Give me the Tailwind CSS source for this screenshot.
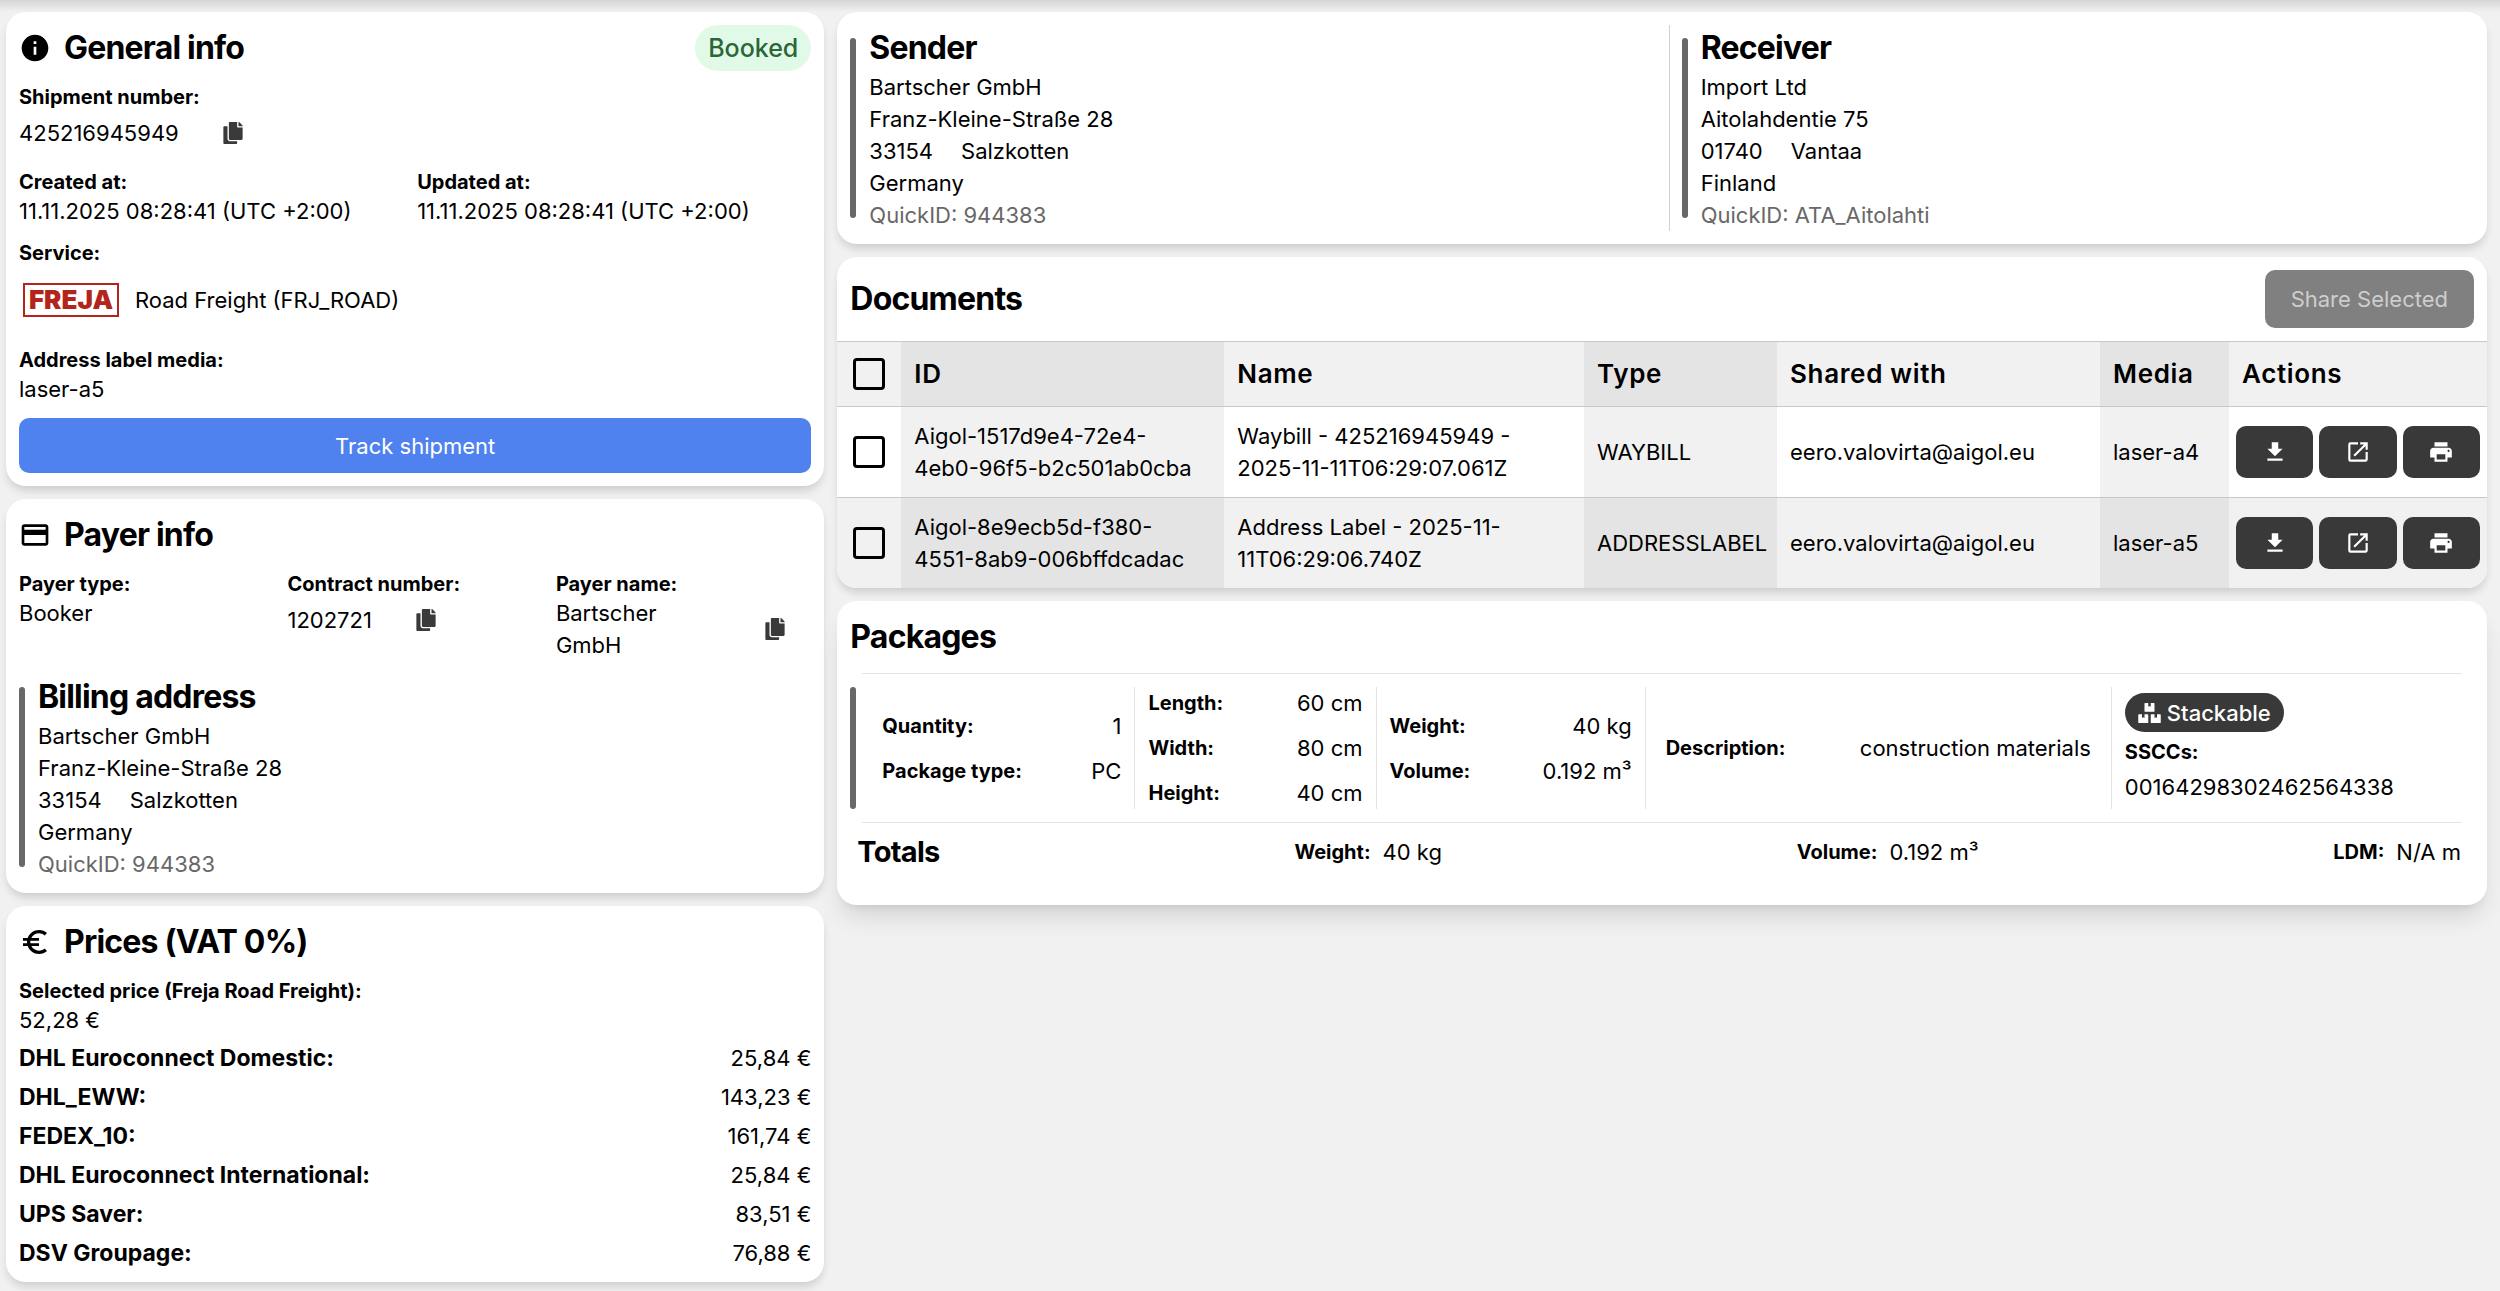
<!DOCTYPE html>
<html lang="en">
<head>
  <meta charset="UTF-8">
  <meta name="viewport" content="width=device-width, initial-scale=1.0">
  <title>Shipment 425216945949</title>
  <script src="https://cdn.jsdelivr.net/npm/@tailwindcss/browser@4"></script>
</head>
<body class="bg-[#f1f1f1] min-h-screen text-black text-[22px]/[32px] font-['Inter',sans-serif]">
  <!-- icons -->
  <svg class="hidden">
    <symbol id="icon-copy" viewBox="0 0 448 512"><path d="M320 448v40c0 13.255-10.745 24-24 24H24c-13.255 0-24-10.745-24-24V120c0-13.255 10.745-24 24-24h72v296c0 30.879 25.121 56 56 56h168zm0-344V0H152c-13.255 0-24 10.745-24 24v368c0 13.255 10.745 24 24 24h272c13.255 0 24-10.745 24-24V128H344c-13.2 0-24-10.8-24-24zm120.971-31.029L375.029 7.029A24 24 0 0 0 358.059 0H352v96h96v-6.059a24 24 0 0 0-7.029-16.97z"/></symbol>
    <symbol id="icon-download" viewBox="0 0 24 24"><path d="M19 9h-4V3H9v6H5l7 7 7-7zM5 18v2h14v-2H5z"/></symbol>
    <symbol id="icon-open" viewBox="0 0 24 24"><path d="M19 19H5V5h7V3H5a2 2 0 0 0-2 2v14a2 2 0 0 0 2 2h14c1.1 0 2-.9 2-2v-7h-2v7zM14 3v2h3.59l-9.83 9.83 1.41 1.41L19 6.41V10h2V3h-7z"/></symbol>
    <symbol id="icon-print" viewBox="0 0 24 24"><path d="M19 8H5c-1.66 0-3 1.34-3 3v6h4v4h12v-4h4v-6c0-1.66-1.34-3-3-3zm-3 11H8v-5h8v5zm3-7c-.55 0-1-.45-1-1s.45-1 1-1 1 .45 1 1-.45 1-1 1zm-1-9H6v4h12V3z"/></symbol>
  </svg>

  <div class="h-3 bg-linear-to-b from-[#d6d6d6] to-[#f1f1f1]"></div>

  <main class="grid grid-cols-12 items-start gap-[13px] pl-[6px] pr-[13px] pb-[10px]">
    <div class="col-span-4 flex flex-col gap-[13px]">

      <!-- General info -->
      <section class="bg-white rounded-[20px] shadow-[0_6px_10px_-2px_rgba(0,0,0,0.16)] p-[13px] flex flex-col gap-[13px]">
        <div class="flex items-center justify-between">
          <div class="flex items-center gap-[13px]">
            <svg class="size-8" viewBox="0 0 24 24"><path d="M12 2C6.48 2 2 6.48 2 12s4.48 10 10 10 10-4.48 10-10S17.52 2 12 2zm1 15h-2v-6h2v6zm0-8h-2V7h2v2z"/></svg>
            <h2 class="text-[32px]/[46px] font-bold tracking-tight">General info</h2>
          </div>
          <span class="bg-[#e1fae8] text-[#2a6637] text-[25px]/[46px] font-medium rounded-full px-[13px]">Booked</span>
        </div>
        <div>
          <h3 class="text-[20px]/[26px] font-bold">Shipment number:</h3>
          <div class="flex items-center h-[46px]">
            <span>425216945949</span>
            <button type="button" aria-label="Copy shipment number" class="ml-11 text-[#3a3a3a]"><svg class="w-5 h-[22px] fill-current"><use href="#icon-copy"/></svg></button>
          </div>
        </div>
        <div class="grid grid-cols-2 gap-1">
          <div>
            <h3 class="text-[20px]/[26px] font-bold">Created at:</h3>
            <p>11.11.2025 08:28:41 (UTC +2:00)</p>
          </div>
          <div>
            <h3 class="text-[20px]/[26px] font-bold">Updated at:</h3>
            <p>11.11.2025 08:28:41 (UTC +2:00)</p>
          </div>
        </div>
        <div>
          <h3 class="text-[20px]/[26px] font-bold">Service:</h3>
          <div class="flex items-center gap-4 h-[68px] pl-1">
            <svg class="w-24 h-[34px]" viewBox="0 0 96 34">
              <rect x="1" y="1" width="94" height="32" fill="none" stroke="#b3241b" stroke-width="2"/>
              <text x="48" y="26" text-anchor="middle" class="fill-[#b3241b] text-[26px] font-black">FREJA</text>
            </svg>
            <span>Road Freight (FRJ_ROAD)</span>
          </div>
        </div>
        <div>
          <h3 class="text-[20px]/[26px] font-bold">Address label media:</h3>
          <p>laser-a5</p>
        </div>
        <button type="button" class="w-full h-[55px] rounded-[10px] bg-[#4f82ee] text-white">Track shipment</button>
      </section>

      <!-- Payer info -->
      <section class="bg-white rounded-[20px] shadow-[0_6px_10px_-2px_rgba(0,0,0,0.16)] p-[13px] flex flex-col gap-[13px]">
        <div class="flex items-center gap-[13px]">
          <svg class="size-8" viewBox="0 0 24 24"><path d="M20 4H4c-1.11 0-1.99.89-1.99 2L2 18c0 1.11.89 2 2 2h16c1.11 0 2-.89 2-2V6c0-1.11-.89-2-2-2zm0 14H4v-6h16v6zm0-10H4V6h16v2z"/></svg>
          <h2 class="text-[32px]/[46px] font-bold tracking-tight">Payer info</h2>
        </div>
        <div class="grid grid-cols-3 gap-[13px]">
          <div>
            <h3 class="text-[20px]/[26px] font-bold">Payer type:</h3>
            <p>Booker</p>
          </div>
          <div>
            <h3 class="text-[20px]/[26px] font-bold">Contract number:</h3>
            <div class="flex items-center h-[46px]">
              <span>1202721</span>
              <button type="button" aria-label="Copy contract number" class="ml-11 text-[#3a3a3a]"><svg class="w-5 h-[22px] fill-current"><use href="#icon-copy"/></svg></button>
            </div>
          </div>
          <div>
            <h3 class="text-[20px]/[26px] font-bold">Payer name:</h3>
            <div class="flex items-center justify-between pr-[26px]">
              <span class="w-40">Bartscher GmbH</span>
              <button type="button" aria-label="Copy payer name" class="text-[#3a3a3a]"><svg class="w-5 h-[22px] fill-current"><use href="#icon-copy"/></svg></button>
            </div>
          </div>
        </div>
        <div class="flex gap-[13px]">
          <div class="w-[6px] my-[13px] rounded-full bg-[#686868]"></div>
          <div>
            <h2 class="text-[32px]/[46px] font-bold tracking-tight">Billing address</h2>
            <p>Bartscher GmbH</p>
            <p>Franz-Kleine-Straße 28</p>
            <p class="flex gap-7"><span>33154</span><span>Salzkotten</span></p>
            <p>Germany</p>
            <p class="text-[#686868]">QuickID: 944383</p>
          </div>
        </div>
      </section>

      <!-- Prices -->
      <section class="bg-white rounded-[20px] shadow-[0_6px_10px_-2px_rgba(0,0,0,0.16)] p-[13px]">
        <div class="flex items-center gap-[13px]">
          <svg class="size-8" viewBox="0 0 24 24"><path d="M15 18.5c-2.51 0-4.68-1.42-5.76-3.5H15v-2H8.58c-.05-.33-.08-.66-.08-1s.03-.67.08-1H15V9H9.24C10.32 6.92 12.5 5.5 15 5.5c1.61 0 3.09.59 4.23 1.57L21 5.3C19.41 3.87 17.3 3 15 3c-3.92 0-7.24 2.51-8.48 6H3v2h3.06c-.04.33-.06.66-.06 1s.02.67.06 1H3v2h3.52c1.24 3.49 4.56 6 8.48 6 2.31 0 4.41-.87 6-2.3l-1.78-1.77c-1.13.98-2.6 1.57-4.22 1.57z"/></svg>
          <h2 class="text-[32px]/[46px] font-bold tracking-tight">Prices (VAT 0%)</h2>
        </div>
        <h3 class="text-[20px]/[26px] font-bold mt-[13px]">Selected price (Freja Road Freight):</h3>
        <p>52,28 €</p>
        <dl class="flex flex-col gap-[7px] mt-[6px]">
          <div class="flex justify-between"><dt class="text-[23px]/[32px] font-bold">DHL Euroconnect Domestic:</dt><dd>25,84 €</dd></div>
          <div class="flex justify-between"><dt class="text-[23px]/[32px] font-bold">DHL_EWW:</dt><dd>143,23 €</dd></div>
          <div class="flex justify-between"><dt class="text-[23px]/[32px] font-bold">FEDEX_10:</dt><dd>161,74 €</dd></div>
          <div class="flex justify-between"><dt class="text-[23px]/[32px] font-bold">DHL Euroconnect International:</dt><dd>25,84 €</dd></div>
          <div class="flex justify-between"><dt class="text-[23px]/[32px] font-bold">UPS Saver:</dt><dd>83,51 €</dd></div>
          <div class="flex justify-between"><dt class="text-[23px]/[32px] font-bold">DSV Groupage:</dt><dd>76,88 €</dd></div>
        </dl>
      </section>
    </div>

    <div class="col-span-8 flex flex-col gap-[13px]">

      <!-- Sender / receiver -->
      <section class="bg-white rounded-[20px] shadow-[0_6px_10px_-2px_rgba(0,0,0,0.16)] p-[13px] grid grid-cols-2 gap-[13px]">
        <div class="flex gap-[13px]">
          <div class="w-[6px] my-[13px] rounded-full bg-[#686868]"></div>
          <div>
            <h2 class="text-[32px]/[46px] font-bold tracking-tight">Sender</h2>
            <p>Bartscher GmbH</p>
            <p>Franz-Kleine-Straße 28</p>
            <p class="flex gap-7"><span>33154</span><span>Salzkotten</span></p>
            <p>Germany</p>
            <p class="text-[#686868]">QuickID: 944383</p>
          </div>
        </div>
        <div class="flex gap-[13px] border-l border-[#d0d0d0] pl-3">
          <div class="w-[6px] my-[13px] rounded-full bg-[#686868]"></div>
          <div>
            <h2 class="text-[32px]/[46px] font-bold tracking-tight">Receiver</h2>
            <p>Import Ltd</p>
            <p>Aitolahdentie 75</p>
            <p class="flex gap-7"><span>01740</span><span>Vantaa</span></p>
            <p>Finland</p>
            <p class="text-[#686868]">QuickID: ATA_Aitolahti</p>
          </div>
        </div>
      </section>

      <!-- Documents -->
      <section class="bg-white rounded-[20px] shadow-[0_6px_10px_-2px_rgba(0,0,0,0.16)] overflow-hidden">
        <div class="flex items-center justify-between p-[13px]">
          <h2 class="text-[32px]/[46px] font-bold tracking-tight">Documents</h2>
          <button type="button" disabled class="h-[58px] px-[26px] rounded-[10px] bg-[#808080] text-[#cdcdcd]">Share Selected</button>
        </div>
        <table class="w-full table-fixed text-left">
          <thead class="text-[26px]/[38px] tracking-wide">
            <tr class="bg-[#f1f1f1] border-y border-[#c8c8c8]">
              <th class="w-16 pl-4"><input type="checkbox" aria-label="Select all documents" class="appearance-none block size-8 border-3 border-black rounded-[4px]"></th>
              <th class="w-[323px] px-[13px] py-[13px] font-semibold bg-[#e4e4e4]">ID</th>
              <th class="px-[13px] font-semibold">Name</th>
              <th class="w-[193px] px-[13px] font-semibold bg-[#e4e4e4]">Type</th>
              <th class="w-[323px] px-[13px] font-semibold">Shared with</th>
              <th class="w-[129px] px-[13px] font-semibold bg-[#e4e4e4]">Media</th>
              <th class="w-[258px] px-[13px] font-semibold">Actions</th>
            </tr>
          </thead>
          <tbody>
            <tr class="border-b border-[#c8c8c8]">
              <td class="pl-4"><input type="checkbox" aria-label="Select waybill" class="appearance-none block size-8 border-3 border-black rounded-[4px]"></td>
              <td class="px-[13px] py-[13px] bg-[#f1f1f1]">Aigol-1517d9e4-72e4-<br>4eb0-96f5-b2c501ab0cba</td>
              <td class="px-[13px]">Waybill - 425216945949 -<br>2025-11-11T06:29:07.061Z</td>
              <td class="px-[13px] bg-[#f1f1f1]">WAYBILL</td>
              <td class="px-[13px]">eero.valovirta@aigol.eu</td>
              <td class="pl-[13px] bg-[#f1f1f1]">laser-a4</td>
              <td class="px-[7px]">
                <div class="flex gap-[6px]">
                  <button type="button" aria-label="Download" class="flex-1 h-[52px] flex items-center justify-center rounded-[10px] bg-[#393939]"><svg class="size-[26px] fill-white"><use href="#icon-download"/></svg></button>
                  <button type="button" aria-label="Open" class="flex-1 h-[52px] flex items-center justify-center rounded-[10px] bg-[#393939]"><svg class="size-[26px] fill-white"><use href="#icon-open"/></svg></button>
                  <button type="button" aria-label="Print" class="flex-1 h-[52px] flex items-center justify-center rounded-[10px] bg-[#393939]"><svg class="size-[26px] fill-white"><use href="#icon-print"/></svg></button>
                </div>
              </td>
            </tr>
            <tr class="bg-[#f1f1f1]">
              <td class="pl-4"><input type="checkbox" aria-label="Select address label" class="appearance-none block size-8 border-3 border-black rounded-[4px]"></td>
              <td class="px-[13px] py-[13px] bg-[#e4e4e4]">Aigol-8e9ecb5d-f380-<br>4551-8ab9-006bffdcadac</td>
              <td class="px-[13px]">Address Label - 2025-11-<br>11T06:29:06.740Z</td>
              <td class="pl-[13px] bg-[#e4e4e4]">ADDRESSLABEL</td>
              <td class="px-[13px]">eero.valovirta@aigol.eu</td>
              <td class="pl-[13px] bg-[#e4e4e4]">laser-a5</td>
              <td class="px-[7px]">
                <div class="flex gap-[6px]">
                  <button type="button" aria-label="Download" class="flex-1 h-[52px] flex items-center justify-center rounded-[10px] bg-[#393939]"><svg class="size-[26px] fill-white"><use href="#icon-download"/></svg></button>
                  <button type="button" aria-label="Open" class="flex-1 h-[52px] flex items-center justify-center rounded-[10px] bg-[#393939]"><svg class="size-[26px] fill-white"><use href="#icon-open"/></svg></button>
                  <button type="button" aria-label="Print" class="flex-1 h-[52px] flex items-center justify-center rounded-[10px] bg-[#393939]"><svg class="size-[26px] fill-white"><use href="#icon-print"/></svg></button>
                </div>
              </td>
            </tr>
          </tbody>
        </table>
      </section>

      <!-- Packages -->
      <section class="bg-white rounded-[20px] shadow-[0_16px_24px_-5px_rgba(0,0,0,0.12),0_6px_10px_-6px_rgba(0,0,0,0.12)] p-[13px]">
        <h2 class="text-[32px]/[46px] font-bold tracking-tight">Packages</h2>
        <hr class="mx-3 my-[13px] border-[#e4e4e4]">
        <div class="flex">
          <div class="w-[6px] rounded-full bg-[#686868]"></div>
          <div class="flex-1 grid grid-cols-[279fr_241fr_269fr_466fr_362fr] divide-x divide-[#e4e4e4]">
            <dl class="flex flex-col justify-center gap-[13px] pl-[26px] pr-[13px]">
              <div class="flex items-center justify-between"><dt class="text-[20px]/[26px] font-bold">Quantity:</dt><dd>1</dd></div>
              <div class="flex items-center justify-between"><dt class="text-[20px]/[26px] font-bold">Package type:</dt><dd>PC</dd></div>
            </dl>
            <dl class="flex flex-col justify-center gap-[13px] px-[13px]">
              <div class="flex items-center justify-between"><dt class="text-[20px]/[26px] font-bold">Length:</dt><dd>60 cm</dd></div>
              <div class="flex items-center justify-between"><dt class="text-[20px]/[26px] font-bold">Width:</dt><dd>80 cm</dd></div>
              <div class="flex items-center justify-between"><dt class="text-[20px]/[26px] font-bold">Height:</dt><dd>40 cm</dd></div>
            </dl>
            <dl class="flex flex-col justify-center gap-[13px] px-[13px]">
              <div class="flex items-center justify-between"><dt class="text-[20px]/[26px] font-bold">Weight:</dt><dd>40 kg</dd></div>
              <div class="flex items-center justify-between"><dt class="text-[20px]/[26px] font-bold">Volume:</dt><dd>0.192 m³</dd></div>
            </dl>
            <dl class="flex flex-col justify-center px-5">
              <div class="flex items-center justify-between"><dt class="text-[20px]/[26px] font-bold">Description:</dt><dd>construction materials</dd></div>
            </dl>
            <div class="flex flex-col items-start px-[13px] py-[6px]">
              <span class="flex items-center gap-[6px] h-[39px] px-[13px] rounded-full bg-[#393939] text-white font-medium">
                <svg class="w-[23px] h-5 fill-current" viewBox="0 0 576 512"><path d="M560 288h-80v96l-32-21.3-32 21.3v-96h-80c-8.8 0-16 7.2-16 16v192c0 8.8 7.2 16 16 16h224c8.8 0 16-7.2 16-16V304c0-8.8-7.2-16-16-16zm-384-64h224c8.8 0 16-7.2 16-16V16c0-8.8-7.2-16-16-16h-80v96l-32-21.3L256 96V0h-80c-8.8 0-16 7.2-16 16v192c0 8.8 7.2 16 16 16zm64 64h-80v96l-32-21.3L96 384v-96H16c-8.8 0-16 7.2-16 16v192c0 8.8 7.2 16 16 16h224c8.8 0 16-7.2 16-16V304c0-8.8-7.2-16-16-16z"/></svg>
                Stackable
              </span>
              <h3 class="text-[20px]/[26px] font-bold mt-[7px]">SSCCs:</h3>
              <p class="mt-[6px]">00164298302462564338</p>
            </div>
          </div>
        </div>
        <hr class="mx-3 my-[13px] border-[#e4e4e4]">
        <div class="flex items-center justify-between pl-[7px] pr-[13px] pb-6">
          <h3 class="text-[29px]/[32px] font-bold tracking-tight">Totals</h3>
          <p class="flex items-center gap-3"><span class="text-[20px]/[26px] font-bold">Weight:</span><span>40 kg</span></p>
          <p class="flex items-center gap-3"><span class="text-[20px]/[26px] font-bold">Volume:</span><span>0.192 m³</span></p>
          <p class="flex items-center gap-3"><span class="text-[20px]/[26px] font-bold">LDM:</span><span>N/A m</span></p>
        </div>
      </section>
    </div>
  </main>
</body>
</html>
